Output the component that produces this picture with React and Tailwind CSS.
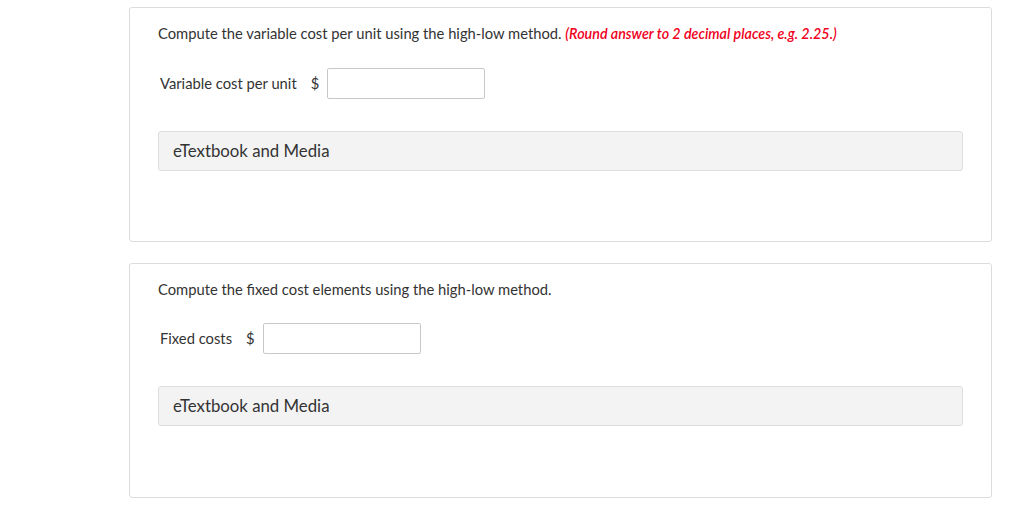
import React from "react";

const questions = [
  {
    prompt: "Compute the variable cost per unit using the high-low method.",
    hint: "(Round answer to 2 decimal places, e.g. 2.25.)",
    label: "Variable cost per unit",
  },
  {
    prompt: "Compute the fixed cost elements using the high-low method.",
    label: "Fixed costs",
  },
];

function QuestionCard({ prompt, hint, label }) {
  return (
    <div className="h-[235px] rounded-[3px] border border-[#dcdcdc] bg-white px-[28px] pt-[15px]">
      <p className="text-[14.75px] leading-[20px] text-[#333]">
        {prompt}{" "}
        {hint && <span className="text-[14.3px] font-semibold italic text-[#f0001c]">{hint}</span>}
      </p>
      <div className="mt-[24px] flex items-center pl-[2px] text-[14.75px] text-[#333]">
        <span>{label}</span>
        <span className="ml-[14px]">$</span>
        <input
          type="text"
          className="ml-[8px] h-[31px] w-[158px] rounded-[2px] border border-[#c8c8c8] bg-white outline-none"
        />
      </div>
      <div className="mt-[32px] flex h-[40px] items-center rounded-[3px] border border-[#dedede] bg-[#f3f3f3] px-[14px] text-[16.8px] text-[#333]">
        eTextbook and Media
      </div>
    </div>
  );
}

export default function App() {
  return (
    <div
      className="min-h-[509px] bg-white pt-[7px]"
      style={{ fontFamily: "Lato, 'Noto Sans', sans-serif" }}
    >
      <div className="ml-[129px] flex w-[863px] flex-col gap-[21px]">
        {questions.map((q) => (
          <QuestionCard key={q.label} {...q} />
        ))}
      </div>
    </div>
  );
}
